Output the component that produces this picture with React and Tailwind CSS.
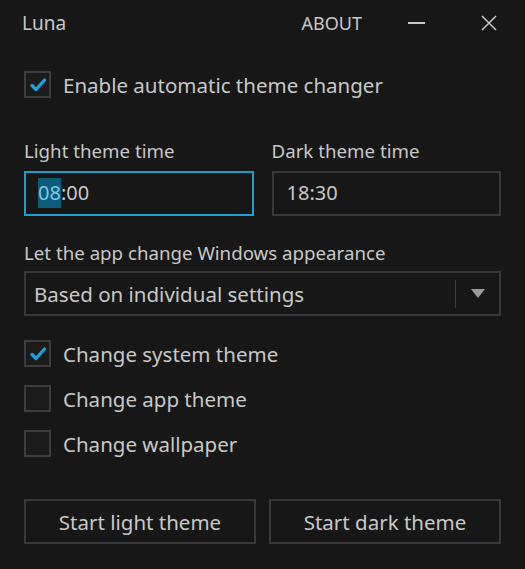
import React from "react";

const font = { fontFamily: '"Noto Sans", "Open Sans", sans-serif' };

const Check = ({ checked, label }) => (
  <div className="flex items-center gap-[12px] h-[27px]">
    <div className="w-[27px] h-[27px] border-2 border-[#3d3d3d] bg-[#1b1b1b] flex items-center justify-center shrink-0">
      {checked && (
        <svg width="18" height="18" viewBox="0 0 18 18">
          <path
            d="M3 9.5l4 4L15.5 4"
            fill="none"
            stroke="#1ba1dc"
            strokeWidth="3.2"
            strokeLinecap="round"
            strokeLinejoin="round"
          />
        </svg>
      )}
    </div>
    <span className="text-[20.5px] text-[#c8c8c8] leading-none pt-[1px]">{label}</span>
  </div>
);

export default function App() {
  return (
    <div
      className="w-[525px] h-[569px] bg-[#171717] text-[#c8c8c8] overflow-hidden"
      style={font}
    >
      {/* Title bar */}
      <div className="flex items-center h-[46px] pl-[22px]">
        <span className="text-[19px] flex-1">Luna</span>
        <span className="text-[18px] mr-[46px]">ABOUT</span>
        <div className="w-[17px] h-[1.5px] bg-[#c8c8c8] mr-[55px]"></div>
        <svg width="18" height="18" viewBox="0 0 18 18" className="mr-[27px]">
          <path d="M2 2l14 14M16 2L2 16" stroke="#c8c8c8" strokeWidth="1.5" />
        </svg>
      </div>

      <div className="px-[24px] pt-[25px]">
        <Check checked label="Enable automatic theme changer" />

        {/* Times */}
        <div className="grid grid-cols-2 gap-[18px] mt-[44px]">
          <div>
            <div className="text-[18.7px] leading-none mb-[10px]">Light theme time</div>
            <div className="h-[45px] border-2 border-[#1e9dd0] flex items-center pl-[12px] text-[20px]">
              <span className="bg-[#0b5b7a] text-[#7fc8e6]">08</span>
              <span>:00</span>
            </div>
          </div>
          <div>
            <div className="text-[18.7px] leading-none mb-[10px]">Dark theme time</div>
            <div className="h-[45px] border-2 border-[#383838] flex items-center pl-[13px] text-[20px]">
              18:30
            </div>
          </div>
        </div>

        {/* Dropdown */}
        <div className="text-[18.7px] leading-none mt-[28px] mb-[9px]">
          Let the app change Windows appearance
        </div>
        <div className="h-[45px] border-2 border-[#383838] flex items-center">
          <span className="flex-1 pl-[8px] text-[20.5px]">Based on individual settings</span>
          <div className="w-px h-[28px] bg-[#3c3c3c]"></div>
          <div className="w-[43px] flex justify-center">
            <svg width="16" height="11" viewBox="0 0 16 11">
              <path d="M1 1h14L8 10z" fill="#9a9a9a" />
            </svg>
          </div>
        </div>

        {/* Options */}
        <div className="flex flex-col gap-[18px] mt-[24px]">
          <Check checked label="Change system theme" />
          <Check label="Change app theme" />
          <Check label="Change wallpaper" />
        </div>

        {/* Buttons */}
        <div className="grid grid-cols-2 gap-[13px] mt-[42px]">
          <button className="h-[45px] border-2 border-[#383838] text-[20.5px] text-[#c8c8c8]">
            Start light theme
          </button>
          <button className="h-[45px] border-2 border-[#383838] text-[20.5px] text-[#c8c8c8]">
            Start dark theme
          </button>
        </div>
      </div>
    </div>
  );
}
